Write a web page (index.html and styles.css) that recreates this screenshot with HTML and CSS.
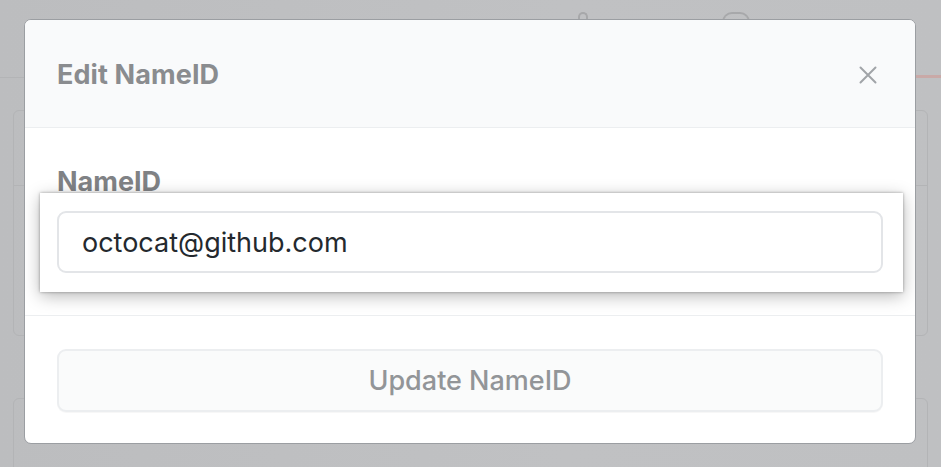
FILE: index.html
```html
<!DOCTYPE html>
<html lang="en">
<head>
<meta charset="utf-8">
<title>Edit NameID</title>
<link rel="stylesheet" href="styles.css">
</head>
<body>
<div class="page">
  <div class="topbar">
    <div class="tabs">
      <span class="tab"><span class="tab-ico"></span></span>
      <span class="tab"><span class="tab-ico shield"></span></span>
    </div>
    <div class="tab-active"></div>
  </div>
  <div class="card">
    <div class="card-head"></div>
    <div class="card-body"></div>
  </div>
  <div class="card card2"></div>
</div>

<div class="modal" role="dialog" aria-label="Edit NameID">
  <div class="modal-header">
    <h2 class="modal-title">Edit NameID</h2>
    <button class="close" aria-label="Close">
      <svg width="18" height="18" viewBox="0 0 18 18" aria-hidden="true">
        <path d="M1.5 1.5 L16.5 16.5 M16.5 1.5 L1.5 16.5" stroke="#a1a4a8" stroke-width="2" stroke-linecap="round" fill="none"/>
      </svg>
    </button>
  </div>
  <div class="modal-body">
    <label class="label" for="nameid">NameID</label>
    <div class="highlight">
      <input id="nameid" class="input" type="text" value="octocat@github.com">
    </div>
  </div>
  <div class="modal-footer">
    <button class="btn">Update NameID</button>
  </div>
</div>
</body>
</html>
```

FILE: styles.css
```css
* { box-sizing: border-box; }
html, body { margin: 0; padding: 0; }
body {
  width: 941px;
  height: 467px;
  overflow: hidden;
  background: #bfc0c2;
  font-family: Inter, "Noto Sans", "Liberation Sans", sans-serif;
  position: relative;
}

/* dimmed background page */
.page {
  height: 100%;
  overflow: hidden;
  background: linear-gradient(90deg, #bcbdbf 0%, #c0c1c3 60%, #bfc0c2 100%);
}
.topbar {
  height: 78px;
  border-bottom: 1px solid #b3b4b6;
  position: relative;
}
.tabs {
  display: flex;
  gap: 120px;
  padding-left: 578px;
  padding-top: 12px;
}
.tab { display: block; width: 24px; height: 10px; }
.tab-ico {
  display: block;
  width: 10px;
  height: 10px;
  border: 2px solid #a7a8aa;
  border-radius: 5px 5px 0 0;
  border-bottom: none;
}
.tab-ico.shield {
  width: 28px;
  border-radius: 12px 12px 0 0;
}
.tab-active {
  position: absolute;
  right: 0;
  bottom: -1px;
  width: 40px;
  height: 3px;
  background: #c9a9a7;
}
.card {
  margin: 32px 13px 0 13px;
  height: 226px;
  border: 1px solid #b3b4b6;
  border-radius: 6px;
}
.card-head {
  height: 75px;
  border-bottom: 1px solid #b3b4b6;
}
.card2 {
  margin-top: 62px;
  height: 110px;
}

/* modal */
.modal {
  position: absolute;
  left: 24px;
  top: 19px;
  width: 892px;
  height: 425px;
  background: #ffffff;
  border: 1px solid #9b9ea2;
  border-radius: 7px;
  overflow: hidden;
  display: flex;
  flex-direction: column;
}
.modal-header {
  height: 108px;
  flex: none;
  background: #f9fafb;
  border-bottom: 1px solid #eceef0;
  display: flex;
  align-items: center;
  justify-content: space-between;
  padding: 0 38px 0 32px;
}
.modal-title {
  margin: 0;
  font-size: 27px;
  font-weight: 700;
  color: #8a8c8f;
  letter-spacing: 0.1px;
  line-height: 30px;
  padding-top: 2px;
}
.close {
  border: 0;
  background: transparent;
  padding: 0;
  width: 18px;
  height: 18px;
  display: flex;
  margin-top: 2px;
}
.modal-body {
  flex: none;
  padding: 41px 32px 23px 32px;
  border-bottom: 1px solid #eceef0;
}
.label {
  display: block;
  font-size: 27px;
  font-weight: 700;
  line-height: 26px;
  color: #808285;
  height: 24px;
}
.highlight {
  position: relative;
  margin: 0 -20px 0 -17px;
  padding: 18px 20px 19px 17px;
  background: #ffffff;
  box-shadow: 0 0 3px rgba(0,0,0,0.35), 0 4px 16px rgba(0,0,0,0.28);
}
.input {
  display: block;
  width: 100%;
  height: 62px;
  border: 2px solid #e3e5e8;
  border-radius: 9px;
  padding: 0 0 0 23px;
  font-family: Inter, "Noto Sans", "Liberation Sans", sans-serif;
  font-size: 27px;
  color: #24292e;
  background: #ffffff;
  outline: none;
}
.modal-footer {
  flex: 1;
  padding: 33px 32px 0 32px;
}
.btn {
  display: block;
  width: 100%;
  height: 63px;
  border: 2px solid #eceef0;
  border-radius: 9px;
  background: #fafbfb;
  font-family: Inter, "Noto Sans", "Liberation Sans", sans-serif;
  font-size: 27px;
  font-weight: 500;
  color: #929598;
  box-shadow: 0 1px 0 rgba(0,0,0,0.03);
}
```
